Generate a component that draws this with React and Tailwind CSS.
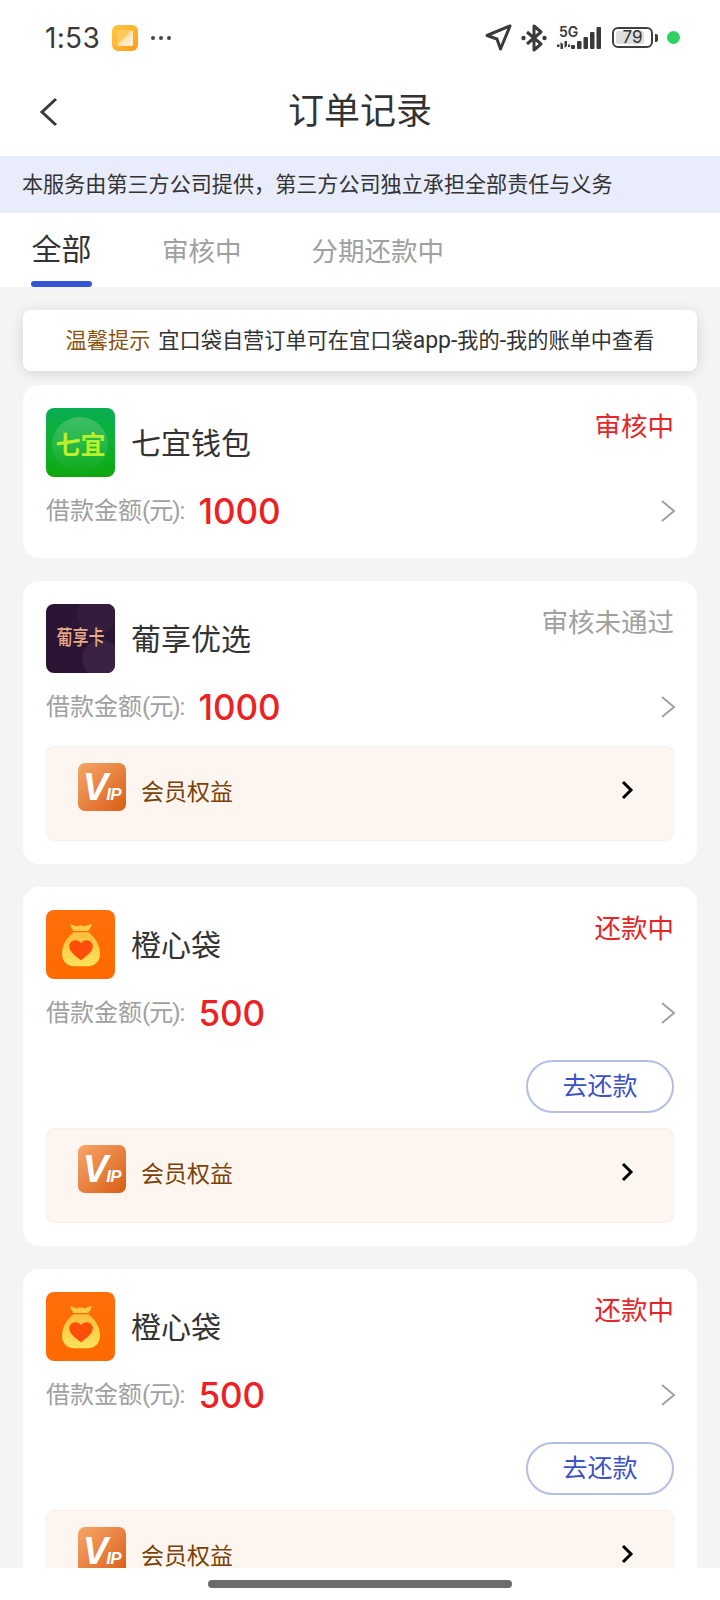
import React from 'react';

const CJK = "font-['Roboto','Noto_Sans_CJK_SC',sans-serif]";

function StatusBar() {
  return (
    <div className="flex h-[76px] shrink-0 items-center justify-between pl-[45px] pr-[40px] pb-[1px] text-[#3a3a3a]">
      <div className="flex items-center">
        <span className="font-['Inter',sans-serif] text-[28px] leading-none tracking-[0.3px]">1:53</span>
        <div className="ml-[12px] h-[26px] w-[26px] rounded-[6px] bg-gradient-to-br from-[#ffc845] to-[#ff9d12] p-[5px]">
          <div className="h-full w-full rounded-[2px] bg-[linear-gradient(135deg,#ffc95c_45%,#ffe2ad_50%,#fff6e6)]" />
        </div>
        <div className="ml-[13px] flex gap-[4px]">
          <span className="h-[4px] w-[4px] rounded-full bg-[#444]" />
          <span className="h-[4px] w-[4px] rounded-full bg-[#444]" />
          <span className="h-[4px] w-[4px] rounded-full bg-[#444]" />
        </div>
      </div>
      <div className="flex items-center">
        <svg width="27" height="27" viewBox="0 0 27 27" fill="none" stroke="#3a3a3a" strokeWidth="3" strokeLinejoin="round">
          <path d="M25 2 2 11.500l10 3.500 3.500 10L25 2Z" />
        </svg>
        <svg className="ml-[9px]" width="26" height="28" viewBox="0 0 26 28" fill="none" stroke="#3a3a3a" strokeWidth="3" strokeLinejoin="round">
          <path d="M6 8l14 12-7 6V2l7 6L6 20" />
          <circle cx="2.500" cy="14" r="2.200" fill="#3a3a3a" stroke="none" />
          <circle cx="23.500" cy="14" r="2.200" fill="#3a3a3a" stroke="none" />
        </svg>
        <div className="relative ml-[10px] h-[24px] w-[46px]">
          <svg width="46" height="24" viewBox="0 0 46 24" fill="#3a3a3a">
            <path d="M0 18.500h2.500v2.500H0zM3.500 16l2.500 2v5H3.500zM7.500 15h2.500v5l-2.500 2zM11 18.500h2v2.500h-2z" />
            <rect x="14" y="19" width="4" height="4" rx="1" />
            <rect x="20" y="15" width="4.500" height="8" rx="1" />
            <rect x="26.500" y="11" width="4.500" height="12" rx="1" />
            <rect x="33" y="6" width="4.500" height="17" rx="1" />
            <rect x="39.500" y="1" width="4.500" height="22" rx="1" />
          </svg>
          <span className="absolute left-[2px] top-[-1px] font-['Inter',sans-serif] text-[14px] font-semibold leading-none">5G</span>
        </div>
        <div className="ml-[9px] flex items-center">
          <div className="relative flex h-[21px] w-[41px] items-center justify-center overflow-hidden rounded-[6px] border-2 border-[#3f3f3f] p-[1px]">
            <div className="absolute bottom-[2px] left-[2px] top-[2px] w-[28px] rounded-[2px] bg-[#dedede]" />
            <span className="relative font-['Inter',sans-serif] text-[17px] leading-none text-[#333]">79</span>
          </div>
          <div className="ml-[2px] h-[8px] w-[3px] rounded-r-[2px] bg-[#3f3f3f]" />
        </div>
        <div className="ml-[9px] h-[13px] w-[13px] rounded-full bg-[#2fd165]" />
      </div>
    </div>
  );
}

function QiyiLogo() {
  return (
    <div className="relative flex h-[69px] w-[69px] shrink-0 items-center justify-center overflow-hidden rounded-[8px] bg-gradient-to-b from-[#08ad52] via-[#0cb22e] to-[#0fa70c]">
      <div className="absolute left-[6px] top-[9px] h-[56px] w-[56px] rounded-full bg-gradient-to-b from-[#3fbd63] to-transparent" />
      <span className="relative mt-[5px] text-[25px] font-bold leading-none text-[#bcf028]">七宜</span>
    </div>
  );
}

function PuxiangLogo() {
  return (
    <div className="relative flex h-[69px] w-[69px] shrink-0 items-center justify-center overflow-hidden rounded-[8px] bg-[#2a1535]">
      <div className="absolute left-[31px] top-[-10px] h-[40px] w-[40px] rounded-full bg-[#331c3c]" />
      <div className="absolute left-[36px] top-[36px] h-[38px] w-[38px] rounded-full bg-[#3a2342]" />
      <span className="relative scale-y-[1.3] text-[16px] font-medium leading-none text-[#e7ab86]">葡享卡</span>
    </div>
  );
}

function BagLogo() {
  return (
    <div className="flex h-[69px] w-[69px] shrink-0 items-center justify-center rounded-[8px] bg-gradient-to-b from-[#ff6f0a] to-[#ff6a00]">
      <svg width="38" height="44" viewBox="0 0 42 52" preserveAspectRatio="none">
        <defs>
          <linearGradient id="bagfill" x1="0" y1="0" x2="0" y2="1">
            <stop offset="0" stopColor="#fdbd3a" />
            <stop offset="1" stopColor="#ffe35c" />
          </linearGradient>
        </defs>
        <path d="M9 1.500c3 .5 5.500 2 7 2.500 2-1.500 7-1.500 9 0 2-1 5-2.200 8-2.500-.5 3-2.500 6-4 8H13C11.500 7.500 9.500 4.500 9 1.500Z" fill="#ffc94a" />
        <path d="M13 11h16c7 5 13 15 13 25 0 10-6 15-14 15H14C6 51 0 46 0 36c0-10 6-20 13-25Z" fill="url(#bagfill)" />
        <path d="M21 44C15 39 8 34 8 27.500 8 23 11.500 20.500 15 20.500c2.500 0 4.800 1.200 6 3.500 1.200-2.300 3.500-3.500 6-3.500 3.500 0 7 2.500 7 7C34 34 27 39 21 44Z" fill="#ff4d0a" />
      </svg>
    </div>
  );
}

function VipIcon() {
  return (
    <div className="mb-[13px] flex h-[48px] w-[48px] shrink-0 items-center justify-center rounded-[7px] bg-gradient-to-br from-[#f6a667] to-[#d95c06] font-['Liberation_Sans',sans-serif] italic text-white">
      <span className="text-[38px] font-bold leading-none tracking-[-2px]">V</span>
      <span className="mt-[14px] text-[17px] font-bold leading-none tracking-[-0.5px]">IP</span>
    </div>
  );
}

function Chevron({ size = 'grey' }) {
  if (size === 'black') {
    return (
      <svg width="14" height="20" viewBox="0 0 14 20" fill="none" stroke="#000" strokeWidth="3">
        <path d="M3 2l8 8-8 8" />
      </svg>
    );
  }
  return (
    <svg width="16" height="24" viewBox="0 0 16 24" fill="none" stroke="#a0a0a0" strokeWidth="2">
      <path d="M2 2l12 10L2 22" />
    </svg>
  );
}

function VipBox() {
  return (
    <div className="mt-[15px] flex h-[95px] items-center rounded-[8px] border border-[#f8efe6] bg-[#fdf6f0] pl-[31px] pr-[39px]">
      <VipIcon />
      <span className="mb-[3px] ml-[15px] text-[23px] leading-none text-[#7b4208]">会员权益</span>
      <div className="mb-[8px] ml-auto">
        <Chevron size="black" />
      </div>
    </div>
  );
}

function OrderCard({ logo, name, status, statusColor, amount, repay, vip }) {
  return (
    <div className="rounded-[16px] bg-white p-[23px]">
      <div className="flex items-start">
        {logo}
        <span className="ml-[16px] mt-[19px] text-[30px] leading-[34px] text-[#333]">{name}</span>
        <span className={`ml-auto mt-[2px] text-[26.500px] leading-[34px] ${statusColor}`}>{status}</span>
      </div>
      <div className="mt-[10px] flex h-[48px] items-center justify-between">
        <div className="flex items-center">
          <span className="text-[24px] leading-none text-[#a0a0a0]">
            借款金额<span className="tracking-[-1px]">(元):</span>
          </span>
          <span className="ml-[14px] font-['Inter',sans-serif] text-[35px] font-medium leading-none text-[#ee2023]">{amount}</span>
        </div>
        <div className="mr-[-2px]">
          <Chevron />
        </div>
      </div>
      {repay && (
        <div className="mt-[23px] flex justify-end">
          <div className="flex h-[53px] w-[148px] items-center justify-center rounded-full border-2 border-[#b4bde4] text-[25px] leading-none text-[#3c50c8]">
            去还款
          </div>
        </div>
      )}
      {vip && <VipBox />}
    </div>
  );
}

export default function App() {
  return (
    <div className={`flex h-[1600px] w-[720px] flex-col overflow-hidden bg-white ${CJK}`}>
      <StatusBar />
      <div className="relative flex h-[80px] shrink-0 items-center justify-center">
        <svg className="absolute left-[39px] top-[20px]" width="20" height="32" viewBox="0 0 20 32" fill="none" stroke="#3a3a3a" strokeWidth="3">
          <path d="M17 3 3 16l14 13" />
        </svg>
        <span className="pb-[8px] text-[36px] leading-none text-[#333]">订单记录</span>
      </div>
      <div className="flex h-[57px] shrink-0 items-center bg-[#e9ecfb] pl-[22px] text-[21.100px] leading-none text-[#333]">
        本服务由第三方公司提供，第三方公司独立承担全部责任与义务
      </div>
      <div className="flex h-[74px] shrink-0 items-start pl-[31px] pt-[17px]">
        <div className="flex flex-col items-center">
          <span className="text-[30px] leading-[40px] text-[#333]">全部</span>
          <div className="mt-[11px] h-[6px] w-[61px] rounded-full bg-[#3454d1]" />
        </div>
        <span className="ml-[70px] mt-[2px] text-[26.500px] leading-[40px] text-[#a0a0a0]">审核中</span>
        <span className="ml-[70px] mt-[2px] text-[26.500px] leading-[40px] text-[#a0a0a0]">分期还款中</span>
      </div>
      <div className="flex min-h-0 flex-1 flex-col gap-[23px] overflow-hidden bg-[#f4f4f5] px-[23px] pt-[23px]">
        <div className="-mb-[9px] flex h-[61px] shrink-0 items-center justify-center rounded-[8px] bg-white text-[21.200px] leading-none text-[#333] shadow-[0_2px_14px_rgba(0,0,0,0.13)]">
          <span className="text-[#8a5410]">温馨提示</span>
          <span className="ml-[8px]">
            宜口袋自营订单可在宜口袋<span className="text-[23px]">app-</span>我的<span className="text-[23px]">-</span>我的账单中查看
          </span>
        </div>
        <OrderCard logo={<QiyiLogo />} name="七宜钱包" status="审核中" statusColor="text-[#e5262a]" amount="1000" />
        <OrderCard logo={<PuxiangLogo />} name="葡享优选" status="审核未通过" statusColor="text-[#a0a0a0]" amount="1000" vip />
        <OrderCard logo={<BagLogo />} name="橙心袋" status="还款中" statusColor="text-[#e5262a]" amount="500" repay vip />
        <OrderCard logo={<BagLogo />} name="橙心袋" status="还款中" statusColor="text-[#e5262a]" amount="500" repay vip />
      </div>
      <div className="flex h-[32px] shrink-0 items-start justify-center bg-white pt-[12px]">
        <div className="h-[8px] w-[304px] rounded-full bg-[#6c6c6c]" />
      </div>
    </div>
  );
}
